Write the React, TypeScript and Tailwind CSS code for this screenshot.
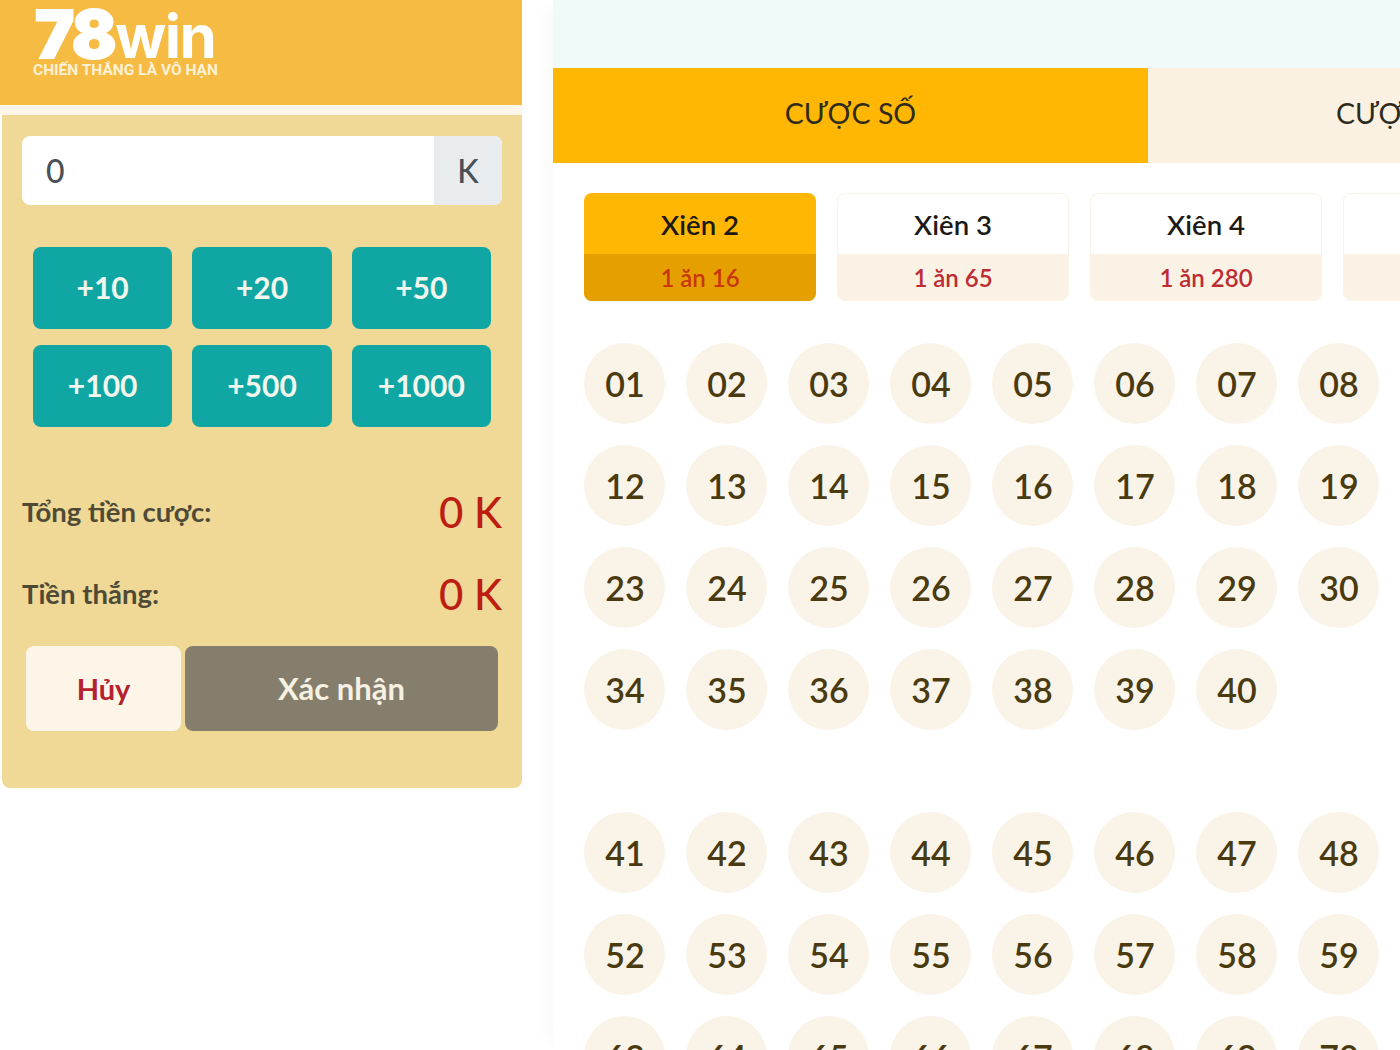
const STAKES = ['+10', '+20', '+50', '+100', '+500', '+1000'];

const BET_TYPES = [
  { name: 'Xiên 2', odds: '1 ăn 16', active: true },
  { name: 'Xiên 3', odds: '1 ăn 65' },
  { name: 'Xiên 4', odds: '1 ăn 280' },
  { name: 'Xiên 5', odds: '1 ăn 800' },
];

const pad = (n: number) => String(n).padStart(2, '0');
const range = (from: number, to: number) =>
  Array.from({ length: to - from + 1 }, (_, i) => pad(from + i));

const GROUPS = [
  [...range(1, 8), ...range(12, 19), ...range(23, 30), ...range(34, 40)],
  [...range(41, 48), ...range(52, 59), ...range(63, 70)],
];

function Summary({ label, value }: { label: string; value: string }) {
  return (
    <div className="flex h-[82px] items-center justify-between">
      <span className="text-[27.5px] font-bold text-[#4f4a36]">{label}</span>
      <span className="pl-[1px] text-[42px] font-medium text-[#bd1e12]">{value}</span>
    </div>
  );
}

function Sidebar() {
  return (
    <div className="w-[522px] shrink-0">
      <div className="h-[105px] bg-[#f6bb43] pl-[33px] pt-[8px] text-white">
        <div className="flex h-[52px] items-baseline pl-[2px] font-['Inter',sans-serif] leading-[52px]">
          <span className="text-[66px] font-black tracking-[-1.5px] [-webkit-text-stroke:2px_white]">78</span>
          <span className="text-[60px] font-bold tracking-[-1.5px]">win</span>
        </div>
        <div className="mt-[1px] font-['Roboto',sans-serif] text-[15.5px] font-bold leading-[18px] text-[#fdf1d6]">
          CHIẾN THẮNG LÀ VÔ HẠN
        </div>
      </div>
      <div className="h-[10px] bg-[#fdf6e8]" />
      <div className="ml-[2px] h-[673px] rounded-b-lg bg-[#f0d896] px-[20px] pt-[21px]">
        <div className="flex h-[69px] overflow-hidden rounded-lg bg-white text-[32px] font-medium text-[#495057]">
          <div className="flex flex-1 items-center pl-[24px]">0</div>
          <div className="flex w-[68px] items-center justify-center bg-[#e9ecef]">K</div>
        </div>
        <div className="mt-[42px] grid grid-cols-3 gap-x-[20px] gap-y-[16px] px-[11px]">
          {STAKES.map((stake) => (
            <button
              key={stake}
              type="button"
              className="h-[82px] rounded-lg bg-[#10a6a4] pb-[2px] text-[30px] font-bold text-[#f2f7ee]"
            >
              {stake}
            </button>
          ))}
        </div>
        <div className="mt-[44px]">
          <Summary label="Tổng tiền cược:" value="0 K" />
          <Summary label="Tiền thắng:" value="0 K" />
        </div>
        <div className="mt-[11px] flex gap-[4px] px-[4px]">
          <button
            type="button"
            className="h-[85px] w-[155px] rounded-lg bg-[#fdf6e8] text-[29px] font-bold text-[#b5202f]"
          >
            Hủy
          </button>
          <button
            type="button"
            className="h-[85px] flex-1 rounded-lg bg-[#857e6c] text-[31px] font-bold text-[#f6f1e2]"
          >
            Xác nhận
          </button>
        </div>
      </div>
    </div>
  );
}

function BetTypeCard({ name, odds, active }: { name: string; odds: string; active?: boolean }) {
  return (
    <div
      className={`h-[108px] w-[232px] shrink-0 overflow-hidden rounded-lg text-center ${
        active ? 'bg-[#ffb703]' : 'border border-[#faf3e6] bg-white'
      }`}
    >
      <div
        className={`flex items-center justify-center text-[27.5px] font-semibold text-[#1c1a14] ${
          active ? 'h-[61px] pt-[3px]' : 'h-[60px] pt-[2px]'
        }`}
      >
        {name}
      </div>
      <div
        className={`flex h-[47px] items-center justify-center text-[24px] font-semibold ${
          active ? 'bg-[#e5a000] text-[#c9370f]' : 'bg-[#faf2e4] text-[#bd2b33]'
        }`}
      >
        {odds}
      </div>
    </div>
  );
}

function NumberGrid({ numbers }: { numbers: string[] }) {
  return (
    <div className="grid w-[795px] grid-cols-8 gap-[21px]">
      {numbers.map((n) => (
        <div
          key={n}
          className="flex h-[81px] w-[81px] items-center justify-center rounded-full bg-[#faf4e8] pl-[1px] text-[34px] font-semibold text-[#4a3a10]"
        >
          {n}
        </div>
      ))}
    </div>
  );
}

export default function App() {
  return (
    <div className="flex h-[1050px] w-[1400px] overflow-hidden bg-white font-['Lato','Noto_Sans',sans-serif]">
      <Sidebar />
      <div className="ml-[31px] w-[1190px] shrink-0 shadow-[-12px_0_16px_-8px_rgba(0,0,0,0.03)]">
        <div className="h-[68px] bg-[#f0faf8]" />
        <div className="flex h-[95px] text-[28.5px] text-[#2e2a1c]">
          <div className="flex w-[595px] items-center justify-center bg-[#ffb703] pb-[5px]">CƯỢC SỐ</div>
          <div className="flex w-[595px] items-center justify-center bg-[#faf1e2] pb-[5px]">CƯỢC ĐẶC BIỆT</div>
        </div>
        <div className="flex gap-[21px] pl-[31px] pt-[30px]">
          {BET_TYPES.map((bet) => (
            <BetTypeCard key={bet.name} {...bet} />
          ))}
        </div>
        <div className="flex flex-col gap-[82px] pl-[31px] pt-[42px]">
          {GROUPS.map((group) => (
            <NumberGrid key={group[0]} numbers={group} />
          ))}
        </div>
      </div>
    </div>
  );
}
